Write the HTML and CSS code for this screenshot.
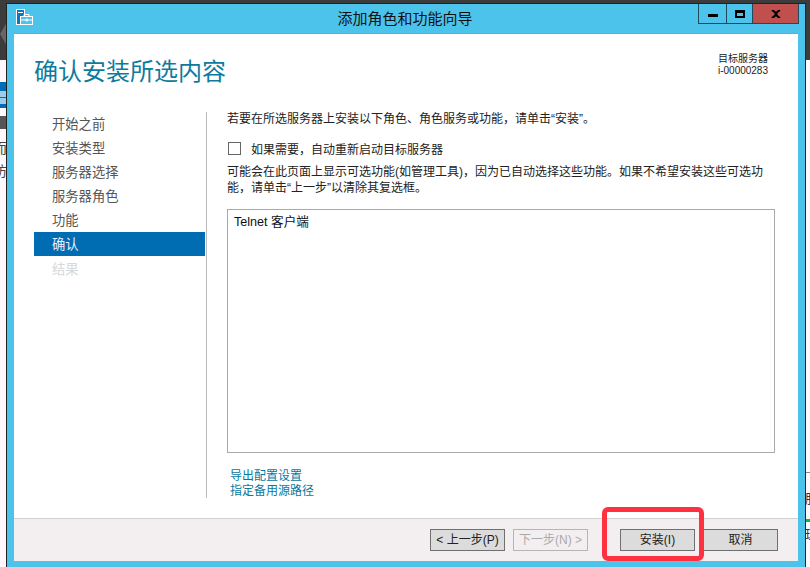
FILE: index.html
```html
<!DOCTYPE html>
<html lang="zh-CN">
<head>
<meta charset="utf-8">
<title>添加角色和功能向导</title>
<link rel="stylesheet" href="styles.css">
</head>
<body>
<div class="desktop">
  <div class="bg-top"></div>
  <div class="bg-wedge"></div>
  <div class="bg-bar"><i></i><i></i></div>
  <div class="bg-dark"></div>
  <div class="bg-glyph g1">而</div>
  <div class="bg-glyph g2">访</div>
  <div class="bg-right r1">服</div>
  <div class="bg-green"></div>
  <div class="bg-right r2">理</div>
  <div class="bg-line"></div>

  <div class="window">
    <header class="titlebar">
      <svg class="appicon" width="17" height="17" viewBox="0 0 17 17">
        <rect x="0.5" y="0.5" width="8" height="15" fill="#0f74c2" stroke="#fff"/>
        <rect x="2" y="3" width="5" height="1" fill="#fff"/>
        <rect x="4.500" y="7.500" width="12" height="8" fill="#4bc3ea" stroke="#fff"/>
        <path d="M8 7.500V5.500h5V7.500M5 11h11M10 10h1.500v2H10z" fill="none" stroke="#fff"/>
      </svg>
      <div class="title">添加角色和功能向导</div>
      <div class="controls">
        <div class="ctl ctl-min"><span></span></div>
        <div class="ctl ctl-max"><span></span></div>
        <div class="ctl ctl-close">
          <svg width="10" height="8" viewBox="0 0 10 8"><path d="M1 0l3.900 3 4-3M1 8l3.900-3 4 3M3 1l4 6M7 1l-4 6" stroke="#000" stroke-width="2" fill="none"/></svg>
        </div>
      </div>
    </header>
    <div class="client">
      <div class="head">
        <h1 class="heading">确认安装所选内容</h1>
        <div class="server"><div>目标服务器</div><div>i-00000283</div></div>
      </div>
      <div class="main">
        <nav class="nav">
          <div class="step">开始之前</div>
          <div class="step">安装类型</div>
          <div class="step">服务器选择</div>
          <div class="step">服务器角色</div>
          <div class="step">功能</div>
          <div class="step active">确认</div>
          <div class="step muted">结果</div>
        </nav>
        <section class="pane">
          <p class="intro">若要在所选服务器上安装以下角色、角色服务或功能，请单击“安装”。</p>
          <label class="check"><span class="box"></span><span>如果需要，自动重新启动目标服务器</span></label>
          <p class="note">可能会在此页面上显示可选功能(如管理工具)，因为已自动选择这些功能。如果不希望安装这些可选功能，请单击“上一步”以清除其复选框。</p>
          <div class="list">Telnet 客户端</div>
          <div class="links"><a>导出配置设置</a><a>指定备用源路径</a></div>
        </section>
      </div>
      <footer class="footer">
        <div class="btn">&lt; 上一步(P)</div>
        <div class="btn disabled">下一步(N) &gt;</div>
        <div class="btn primary">安装(I)</div>
        <div class="btn">取消</div>
      </footer>
    </div>
  </div>
  <div class="highlight"></div>
</div>
</body>
</html>
```
FILE: styles.css
```css
* { box-sizing: border-box; }
html, body { margin: 0; padding: 0; }
body {
  width: 810px;
  height: 567px;
  overflow: hidden;
  font-family: "Liberation Sans", "Noto Sans CJK SC", sans-serif;
  font-size: 12px;
  color: #222;
  background: #fff9fd;
}
.desktop { position: relative; width: 810px; height: 567px; overflow: hidden; }

/* desktop behind the window */
.bg-top { position: absolute; left: 0; top: 0; width: 810px; height: 60px; background: #3c3c3c; }
.bg-wedge { position: absolute; left: 0; top: 22px; width: 7px; height: 24px; background: #666; clip-path: polygon(100% 0, 100% 100%, 0 50%); }
.bg-bar { position: absolute; left: 0; top: 82px; width: 7px; height: 26px; background: #006cb4; padding-top: 9px; }
.bg-bar i { display: block; width: 6px; height: 6px; margin-bottom: 1px; background: #9ccbec; }
.bg-dark { position: absolute; left: 0; top: 116px; width: 7px; height: 13px; background: #555; }
.bg-glyph { position: absolute; left: -7px; width: 14px; font-size: 14px; line-height: 16px; color: #444; }
.g1 { top: 140px; }
.g2 { top: 163px; }
.bg-right { position: absolute; left: 805px; font-size: 13px; line-height: 16px; color: #333; }
.r1 { top: 491px; }
.r2 { top: 527px; }
.bg-green { position: absolute; left: 806px; top: 519px; width: 4px; height: 3px; background: #12b83c; }
.bg-line { position: absolute; left: 806px; top: 472px; width: 4px; height: 1px; background: #888; }

/* window */
.window {
  position: absolute;
  left: 6px;
  top: 3px;
  width: 800px;
  height: 564px;
  padding: 0 7px 6px 7px;
  display: flex;
  flex-direction: column;
  background: #4bc3ea;
  border-left: 1px solid #222;
  border-right: 1px solid #222;
  border-top: 1px solid #222;
}
.titlebar { position: relative; height: 29px; flex: none; display: flex; justify-content: center; padding-right: 2px; }
.appicon { position: absolute; left: 2px; top: 5px; }
.title { font-size: 15px; line-height: 20px; padding-top: 5px; color: #111; }
.controls { position: absolute; right: -1px; top: 0; height: 20px; display: flex; }
.ctl {
  height: 20px;
  display: flex;
  align-items: center;
  justify-content: center;
  border: 1px solid #1e4a5c;
  border-top: 0;
  margin-left: -1px;
}
.ctl-min { width: 29px; }
.ctl-min span { width: 10px; height: 3px; background: #000; margin-top: 3px; }
.ctl-max { width: 27px; }
.ctl-max span { width: 10px; height: 8px; border: 2px solid #000; border-top-width: 3px; }
.ctl-close { width: 47px; background: #c0504d; }

.client {
  flex: 1;
  display: flex;
  flex-direction: column;
  min-height: 0;
  background: #fff;
  border-top: 1px solid #7ba3bd;
}
.head { flex: none; height: 78px; display: flex; justify-content: space-between; padding: 0 30px 0 20px; }
.heading {
  margin: 21px 0 0;
  font-size: 24px;
  font-weight: 400;
  line-height: 34px;
  color: #0e7a9c;
}
.server { padding-top: 19px; text-align: right; font-size: 10px; line-height: 12px; color: #222; }

.main { flex: 1; display: flex; min-height: 0; }
.nav {
  width: 193px;
  flex: none;
  height: 386px;
  padding: 0 0 0 20px;
  border-right: 1px solid #bbb;
}
.step {
  width: 171px;
  height: 24px;
  padding-left: 18px;
  font-size: 13.3px;
  line-height: 26px;
  color: #555;
}
.step.active { background: #006cb1; color: #eef; }
.step.muted { color: #d8d8d8; line-height: 28px; }

.pane { flex: 1; padding: 0 23px 0 20px; min-width: 0; height: 386px; }
.intro { margin: 0; font-size: 12px; line-height: 14px; color: #222; }
.check { display: flex; align-items: center; gap: 10px; margin-top: 13px; height: 18px; font-size: 12px; color: #222; }
.box { width: 13px; height: 13px; margin-left: 1px; border: 1px solid #666; background: #fff; flex: none; }
.note { margin: 7px 0 0; font-size: 12px; line-height: 16px; color: #222; }
.list {
  width: 548px;
  height: 244px;
  margin-top: 13px;
  border: 1px solid #aaa;
  padding: 4px 6px;
  font-size: 12.6px;
  line-height: 17px;
  color: #111;
}
.links { margin-top: 16px; padding-left: 3px; display: flex; flex-direction: column; }
.links a { font-size: 12px; line-height: 15px; color: #08789c; }

.footer {
  flex: none;
  height: 43px;
  display: flex;
  align-items: flex-start;
  justify-content: flex-end;
  gap: 8px;
  padding: 10px 20px 0 0;
  margin-top: auto;
  background: #f3eff0;
  border-top: 1px solid #d5d0d0;
}
.btn {
  width: 75px;
  height: 22px;
  border: 1px solid #707070;
  background: #dcdcdc;
  font-size: 12px;
  line-height: 20px;
  text-align: center;
  color: #222;
}
.btn.disabled { border-color: #b5b5b5; background: #f3eff0; color: #aaa; margin-right: 24px; }

.highlight {
  position: absolute;
  left: 602px;
  top: 507px;
  width: 102px;
  height: 54px;
  border: 5px solid #ff3040;
  border-radius: 6px;
}
```
